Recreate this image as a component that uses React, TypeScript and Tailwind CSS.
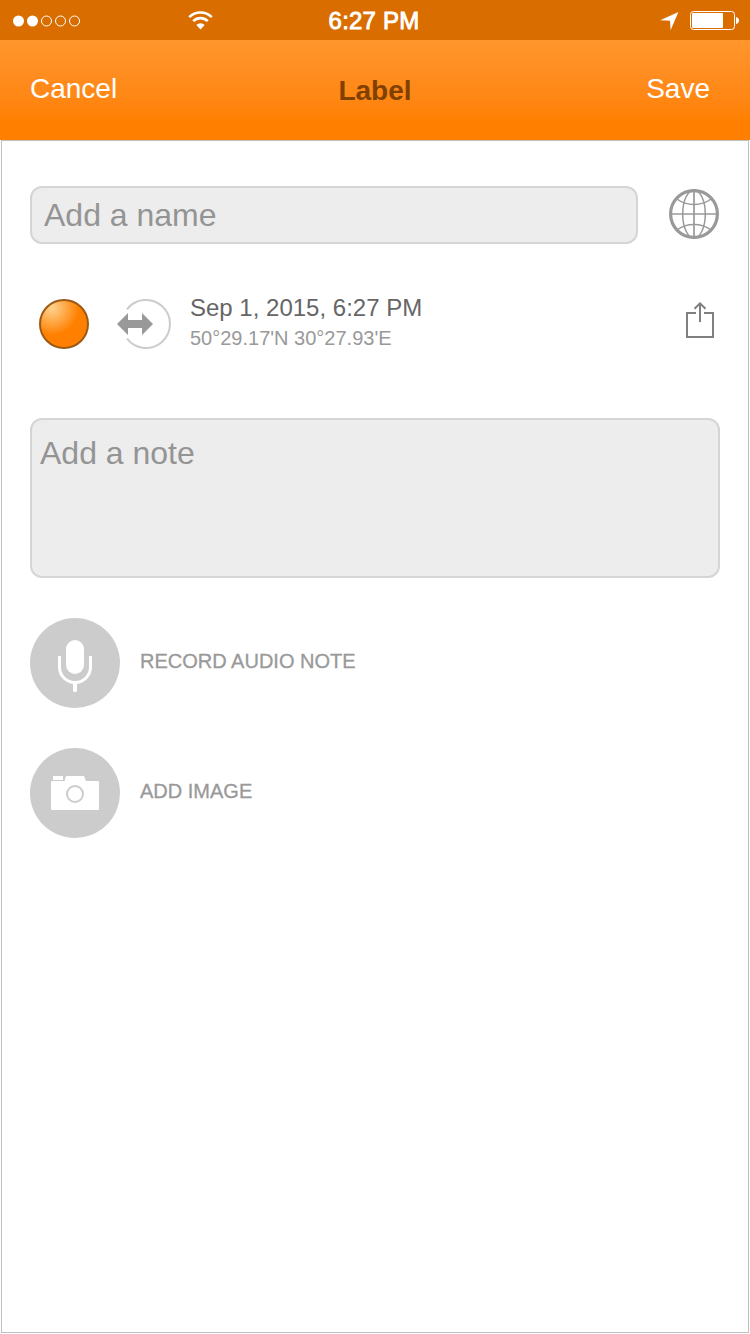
import type { ReactNode } from "react";

function StatusBar() {
  return (
    <div className="grid h-10 grid-cols-[1fr_auto_1fr] items-center bg-[#d96d00] pl-[11px] pr-[11px] text-white">
      <div className="flex items-center pl-0.5">
        <svg width="68" height="12" viewBox="0 0 68 12" className="mt-px">
          {[0, 1, 2, 3, 4].map((i) => (
            <circle
              key={i}
              cx={5.5 + i * 14}
              cy="6"
              r={i < 2 ? 5.5 : 5}
              fill={i < 2 ? "#fff" : "none"}
              stroke={i < 2 ? "none" : "#fff"}
            />
          ))}
        </svg>
        <svg width="26" height="19" viewBox="0 0 26 19" className="ml-[107px]" fill="none" stroke="#fff">
          <path d="M1.2 6.1a16.2 16.2 0 0 1 22.6 0" strokeWidth="2.6" />
          <path d="M5.2 10.1a10.4 10.4 0 0 1 14.6 0" strokeWidth="2.6" />
          <path d="M12.5 18.4 8.3 14a6 6 0 0 1 8.4 0z" fill="#fff" stroke="none" />
        </svg>
      </div>
      <span className="-ml-0.5 pt-0.5 text-2xl leading-8 tracking-[0.2px] [-webkit-text-stroke:0.9px_#fff]">6:27 PM</span>
      <div className="flex items-center justify-end">
        <svg width="20" height="20" viewBox="0 0 20 20" className="mr-[10px] mt-px" fill="#fff">
          <path d="M18.4 1 .2 9.2l9.8.6.6 9.5z" />
        </svg>
        <svg width="49" height="19" viewBox="0 0 49 19" className="mt-px">
          <rect x=".5" y=".5" width="44" height="18" rx="3" fill="none" stroke="#fff" />
          <rect x="2" y="2" width="31" height="15" rx="1" fill="#fff" />
          <path d="M46 6c4 .5 4 6.500 0 7z" fill="#fff" />
        </svg>
      </div>
    </div>
  );
}

function NavBar() {
  return (
    <header className="grid h-[100px] grid-cols-[1fr_auto_1fr] items-center bg-linear-to-b from-[#ff962c] to-[#ff8000] to-82% px-[30px] text-[28px] leading-8 text-white">
      <button className="pb-0.5 text-left">Cancel</button>
      <h1 className="pt-0.5 font-bold text-[#804000]">Label</h1>
      <button className="pb-0.5 pr-[10px] text-right">Save</button>
    </header>
  );
}

function GlobeIcon() {
  return (
    <svg width="50" height="50" viewBox="0 0 50 50" fill="none" stroke="#999">
      <circle cx="25" cy="25" r="23.400" strokeWidth="3.200" />
      <path d="M25 1v48M1 25h48" strokeWidth="1.700" />
      <ellipse cx="25" cy="25" rx="11.300" ry="24" strokeWidth="1.500" />
      <path d="M8 10c9.500 7.300 24.500 7.300 34 0M8 41c9.500-7.300 24.500-7.300 34 0" strokeWidth="1.500" />
    </svg>
  );
}

function ColorDot() {
  return (
    <svg width="50" height="50" viewBox="0 0 50 50">
      <defs>
        <radialGradient id="dot" gradientUnits="userSpaceOnUse" cx="13" cy="9" r="27">
          <stop offset="0" stopColor="#ffd390" />
          <stop offset="1" stopColor="#ff8000" />
        </radialGradient>
      </defs>
      <circle cx="25" cy="25" r="24" fill="url(#dot)" stroke="#9c5a14" strokeWidth="2" />
    </svg>
  );
}

function SwapIcon() {
  return (
    <svg width="54" height="50" viewBox="0 0 54 50">
      <path d="M10 10.300a24 24 0 1 1 0 29.400" fill="none" stroke="#ccc" strokeWidth="2" />
      <path d="M0 25 11 14v7h14v-7l11 11-11 11v-7H11v7z" fill="#999" />
    </svg>
  );
}

function ShareIcon() {
  return (
    <svg width="28" height="37" viewBox="0 0 28 37" fill="none" stroke="#808080" strokeWidth="2">
      <path d="M10 12H1v24h26V12h-9" />
      <path d="M14 21V3M8.500 7.800 14 2.300l5.500 5.500" />
    </svg>
  );
}

function MicIcon() {
  return (
    <svg width="90" height="90" viewBox="0 0 90 90">
      <rect x="36" y="22" width="18" height="34" rx="9" fill="#fff" />
      <path d="M29.500 38v11a15.500 15.500 0 0 0 31 0V38" fill="none" stroke="#fff" strokeWidth="3" />
      <path d="M45 65v7.200" stroke="#fff" strokeWidth="4" strokeLinecap="round" />
    </svg>
  );
}

function CameraIcon() {
  return (
    <svg width="90" height="90" viewBox="0 0 90 90" fill="#fff">
      <rect x="23" y="28" width="10" height="4" />
      <path d="M34.500 33 36 28h18l1.800 5H68a1 1 0 0 1 1 1v27a1 1 0 0 1-1 1H22a1 1 0 0 1-1-1V34a1 1 0 0 1 1-1z" />
      <circle cx="45" cy="46" r="8" stroke="#ccc" strokeWidth="2" />
    </svg>
  );
}

function ActionRow({ icon, label }: { icon: ReactNode; label: string }) {
  return (
    <button className="flex items-center gap-5 text-left">
      <span className="size-[90px] rounded-full bg-[#ccc]">{icon}</span>
      <span className="pb-1 text-xl leading-[30px] text-[#999] [-webkit-text-stroke:0.3px_#999]">{label}</span>
    </button>
  );
}

export default function App() {
  return (
    <div className="flex h-[1334px] w-[750px] flex-col bg-white font-['Liberation_Sans',Arial,sans-serif]">
      <StatusBar />
      <NavBar />
      <main className="mx-px mb-px flex-1 border border-[#c0c0c0] px-7 pt-[45px]">
        <div className="flex items-center justify-between">
          <div className="flex h-[58px] w-[608px] items-center rounded-xl border-2 border-[#d5d5d5] bg-[#ededed] pl-3 text-[32px] leading-9 text-[#949494]">
            Add a name
          </div>
          <div className="mr-px pb-0.5">
            <GlobeIcon />
          </div>
        </div>

        <div className="mt-[50px] flex h-[60px] items-center pl-[9px] pr-1.5">
          <ColorDot />
          <div className="ml-7">
            <SwapIcon />
          </div>
          <div className="mb-0.5 ml-[19px] flex-1">
            <p className="text-2xl leading-[30px] text-[#666]">Sep 1, 2015, 6:27 PM</p>
            <p className="text-xl leading-[30px] text-[#999]">50°29.17'N 30°27.93'E</p>
          </div>
          <div className="mb-[9px]">
            <ShareIcon />
          </div>
        </div>

        <div className="mt-16 h-40 rounded-xl border-2 border-[#d5d5d5] bg-[#ededed] pl-2 pt-[15px] text-[32px] leading-9 text-[#949494]">
          Add a note
        </div>

        <div className="mt-10 flex flex-col gap-10">
          <ActionRow icon={<MicIcon />} label="RECORD AUDIO NOTE" />
          <ActionRow icon={<CameraIcon />} label="ADD IMAGE" />
        </div>
      </main>
    </div>
  );
}
